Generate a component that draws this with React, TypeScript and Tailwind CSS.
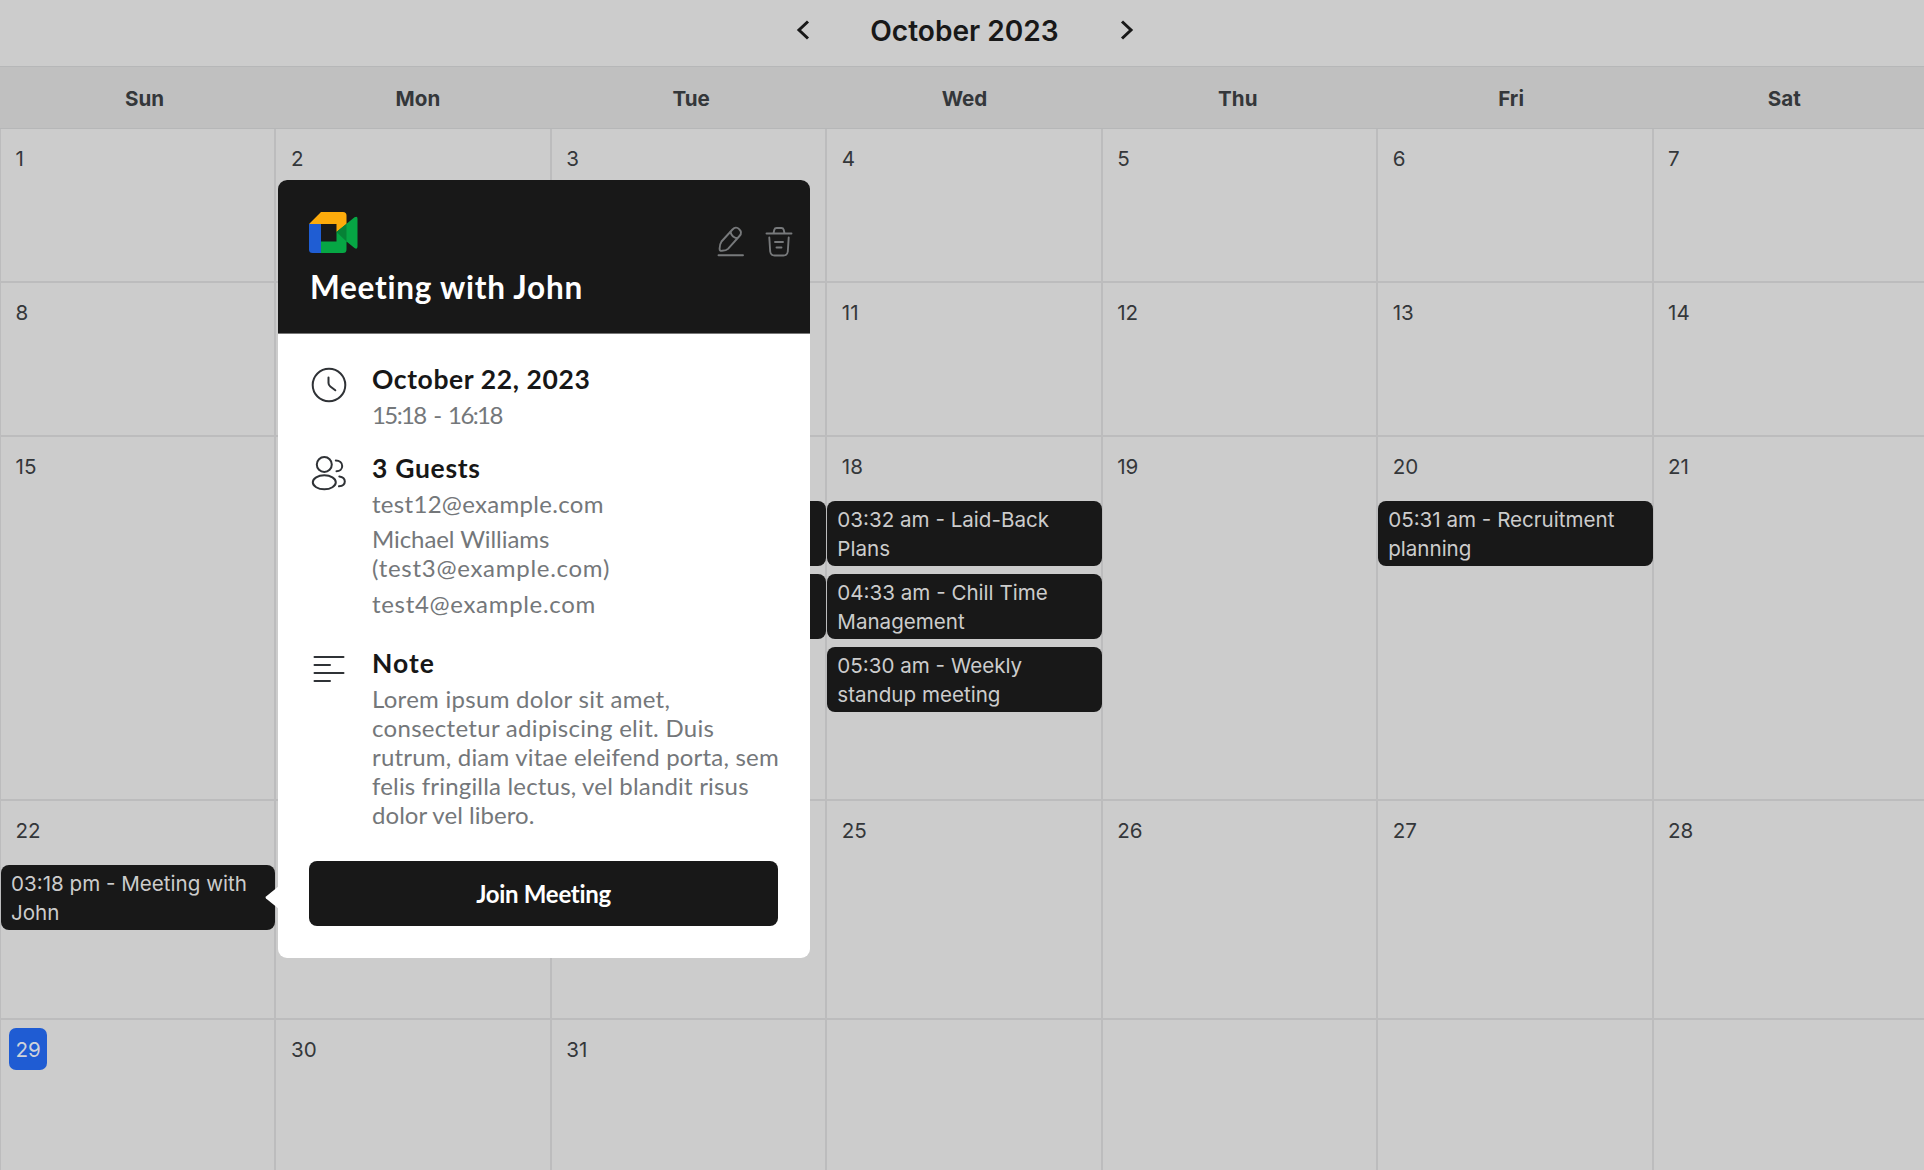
import React from "react";

type CalendarEvent = { time: string; title: string };
type Day = { n?: number; today?: boolean; busySlots?: number; events?: CalendarEvent[] };

const weekdays = ["Sun", "Mon", "Tue", "Wed", "Thu", "Fri", "Sat"];

const events: Record<number, CalendarEvent[]> = {
  18: [
    { time: "03:32 am", title: "Laid-Back Plans" },
    { time: "04:33 am", title: "Chill Time Management" },
    { time: "05:30 am", title: "Weekly standup meeting" },
  ],
  20: [{ time: "05:31 am", title: "Recruitment planning" }],
  22: [{ time: "03:18 pm", title: "Meeting with John" }],
};

// Days that lie under the open popover carry no label.
const covered = [9, 10, 16, 17, 23, 24];

const days: Day[] = Array.from({ length: 35 }, (_, i) => ({
  n: i < 31 && !covered.includes(i + 1) ? i + 1 : undefined,
  today: i + 1 === 29,
  busySlots: i + 1 === 17 ? 2 : 0,
  events: events[i + 1],
}));

function DayCell({ day }: { day: Day }) {
  return (
    <div className="flex min-w-0 flex-col border-r-2 border-b-2 border-[#bcbcbd]">
      <div className="flex h-[64px] shrink-0 items-start pt-[8px] pl-[8px]">
        {day.n && (
          <span
            className={
              day.today
                ? "flex h-[42px] items-center rounded-[7px] bg-[#1f5cd3] px-[6.5px] pt-[3px] text-[#cfd3da]"
                : "flex h-[42px] items-center px-[6.5px] pt-[3px]"
            }
          >
            {day.n}
          </span>
        )}
      </div>
      <div className="-mr-px flex flex-col gap-[8px]">
        {Array.from({ length: day.busySlots ?? 0 }, (_, i) => (
          <div key={i} className="h-[65px] rounded-[8px] bg-[#181818]" />
        ))}
        {day.events?.map((e) => (
          <div
            key={e.time}
            className="h-[65px] overflow-hidden rounded-[8px] bg-[#181818] px-[10px] pt-[4px] leading-[29.2px] text-[#cccccc]"
          >
            {`${e.time} - ${e.title}`}
          </div>
        ))}
      </div>
    </div>
  );
}

function MeetLogo() {
  return (
    <svg width="49" height="41" viewBox="0 0 49 41">
      <path d="M12 0H34a3.5 3.5 0 0 1 3.500 3.500V12L27.500 20V12H0Z" fill="#fdab0b" />
      <path d="M0 12H12V41H3.500A3.500 3.500 0 0 1 0 37.500Z" fill="#1f5dd3" />
      <path d="M12 29.500H27.500V20L45.500 5.200Q48.500 3.600 48.500 6.500V34.500Q48.500 37.800 45.500 36L37.500 29.500V37.500a3.500 3.500 0 0 1-3.500 3.500H12Z" fill="#06a644" />
      <path d="M27.500 20L37.500 12V29.500Z" fill="#068236" />
    </svg>
  );
}

function EditIcon() {
  return (
    <svg width="28" height="32" viewBox="0 0 28 32" fill="none" stroke="#77797b" strokeWidth="1.900" strokeLinecap="round" strokeLinejoin="round">
      <path d="M15.500 3.500L4.500 15.500C3.500 17 2.700 19.500 2.600 22.500C2.500 24.500 3.300 25 5 24.800C8 24.600 9.500 24.300 11 22.800L22.500 10C24.500 7.800 24.500 5.300 22.200 3.200C20 1 17.700 1.200 15.500 3.500Z" />
      <path d="M13.500 6C14.300 9.200 16.700 11.600 20 12.300" />
      <path d="M1.500 29.300H26" />
    </svg>
  );
}

function TrashIcon() {
  return (
    <svg width="28" height="32" viewBox="0 0 28 32" fill="none" stroke="#77797b" strokeWidth="1.900" strokeLinecap="round" strokeLinejoin="round">
      <path d="M1.500 7.500H26.500M8.500 7.300L9.300 3.800C9.700 2.400 10.200 2 11.600 2H16.400C17.800 2 18.300 2.400 18.700 3.800L19.500 7.300" />
      <path d="M4.300 11.500L5.200 25.500C5.500 28.500 6.500 29.500 9.500 29.500H18.500C21.500 29.500 22.500 28.500 22.800 25.500L23.700 11.500M10 16H18M11.500 21.500H16.500" />
    </svg>
  );
}

function ClockIcon() {
  return (
    <svg width="36" height="36" viewBox="0 0 36 36" fill="none" stroke="#2f3236" strokeWidth="2" strokeLinecap="round" strokeLinejoin="round">
      <circle cx="18" cy="18" r="16.300" />
      <path d="M17.500 10.500V16C17.500 17.700 18 18.500 19.300 19.500L24.300 23.300" />
    </svg>
  );
}

function GuestsIcon() {
  return (
    <svg width="36" height="36" viewBox="0 0 36 36" fill="none" stroke="#2f3236" strokeWidth="2" strokeLinecap="round">
      <circle cx="13.300" cy="8.500" r="7.500" />
      <ellipse cx="13.300" cy="26.300" rx="11.500" ry="7" />
      <path d="M24.800 4.500C28.500 4.500 31.200 6.800 31.200 10C31.200 13 28.800 15.300 25.500 15.300M28.300 20.500C31.500 21 33.800 22.900 33.800 25.400C33.800 27.800 31.500 29.900 28 30.300" />
    </svg>
  );
}

function NoteIcon() {
  return (
    <svg width="36" height="36" viewBox="0 0 36 36" fill="none" stroke="#2f3236" strokeWidth="2" strokeLinecap="round">
      <path d="M3.500 6H32.500M3.500 14H19M3.500 22H32.500M3.500 30H19" />
    </svg>
  );
}

function Section({ icon, title, titleClass, children }: { icon: React.ReactNode; title: string; titleClass: string; children: React.ReactNode }) {
  return (
    <div className="flex">
      <div className="w-[61px] shrink-0 pt-[4px]">{icon}</div>
      <div className="min-w-0 flex-1 whitespace-nowrap text-[#74777a]">
        <h3 className={`mb-[5px] text-[26.5px] leading-[32px] font-bold text-[#171717] ${titleClass}`}>{title}</h3>
        {children}
      </div>
    </div>
  );
}

function Popover() {
  return (
    <div className="absolute top-[180px] left-[278px] h-[777.500px] w-[532px] rounded-[9px] bg-white font-[Lato,sans-serif] text-[24px] leading-[29px]">
      <svg className="absolute top-[706px] -left-[13px]" width="14" height="23" viewBox="0 0 14 23">
        <path d="M14 0V23L1 12.500Q0 11.500 1 10.500Z" fill="#fff" />
      </svg>
      <div className="h-[154px] rounded-t-[9px] border-b border-[#777] bg-[#181818] pl-[31px]">
        <div className="flex h-[87px] justify-between pt-[32px] pr-[17px]">
          <MeetLogo />
          <div className="flex gap-[20px] pt-[14px]">
            <EditIcon />
            <TrashIcon />
          </div>
        </div>
        <h2 className="pl-[1px] text-[31.5px] leading-[40px] font-bold tracking-[0.76px] whitespace-nowrap text-white">Meeting with John</h2>
      </div>
      <div className="flex flex-col px-[33px] pt-[29px]">
        <Section icon={<ClockIcon />} title="October 22, 2023" titleClass="tracking-[0.6px]">
          <p className="tracking-[-1.13px] [word-spacing:3px]">
            <span className="tracking-[-1.6px]">15:18 - 16:18</span>
          </p>
        </Section>
        <div className="mt-[23px]">
          <Section icon={<GuestsIcon />} title="3 Guests" titleClass="tracking-[0.7px]">
            <p className="tracking-[0.3px]">test12@example.com</p>
            <p className="mt-[6px]">
              <span className="tracking-[-0.08px]">Michael Williams</span>
              <br />
              <span className="tracking-[0.72px]">(test3@example.com)</span>
            </p>
            <p className="mt-[7px] tracking-[0.68px]">test4@example.com</p>
          </Section>
        </div>
        <div className="mt-[29px]">
          <Section icon={<NoteIcon />} title="Note" titleClass="tracking-[1px]">
            <p className="leading-[29.100px]">
              <span className="tracking-[0.28px]">Lorem ipsum dolor sit amet,</span><br />
              <span className="tracking-[0.3px]">consectetur adipiscing elit. Duis</span><br />
              <span className="tracking-[0.2px]">rutrum, diam vitae eleifend porta, sem</span><br />
              <span className="tracking-[0.18px]">felis fringilla lectus, vel blandit risus</span><br />
              <span className="tracking-[0.04px]">dolor vel libero.</span>
            </p>
          </Section>
        </div>
      </div>
      <button className="mt-[32px] ml-[31px] flex h-[65px] w-[469px] items-center justify-center rounded-[8px] bg-[#181818] pb-px text-[24px] font-bold tracking-[-0.3px] text-white">
        Join Meeting
      </button>
    </div>
  );
}

export default function App() {
  return (
    <div className="relative flex h-[1170px] w-[1924px] flex-col overflow-hidden bg-[#cccccc] font-[Inter,sans-serif] text-[20.6px] text-[#34373a]">
      <header className="flex h-[66px] shrink-0 items-center justify-center pb-[6px] pl-[5px] text-[#181818]">
        <svg width="14" height="20" viewBox="0 0 14 20" fill="none" stroke="currentColor" strokeWidth="3"><path d="M12 1.500L3 10L12 18.500" /></svg>
        <h1 className="w-[310px] pt-[3px] text-center text-[28.1px] font-semibold">October 2023</h1>
        <svg width="14" height="20" viewBox="0 0 14 20" fill="none" stroke="currentColor" strokeWidth="3"><path d="M2 1.500L11 10L2 18.500" /></svg>
      </header>
      <div className="grid h-[63px] shrink-0 grid-cols-7 border-y border-[#b6b7b8] bg-[#c0c0c0] pr-[3px] pl-[8px]">
        {weekdays.map((d) => (
          <div key={d} className="flex items-center justify-center pt-[4px] font-bold">{d}</div>
        ))}
      </div>
      <div className="grid w-[1929px] grid-cols-7 grid-rows-[154px_154px_364px_219px_219px] border-l border-[#bcbcbd]">
        {days.map((d, i) => (
          <DayCell key={i} day={d} />
        ))}
      </div>
      <Popover />
    </div>
  );
}
